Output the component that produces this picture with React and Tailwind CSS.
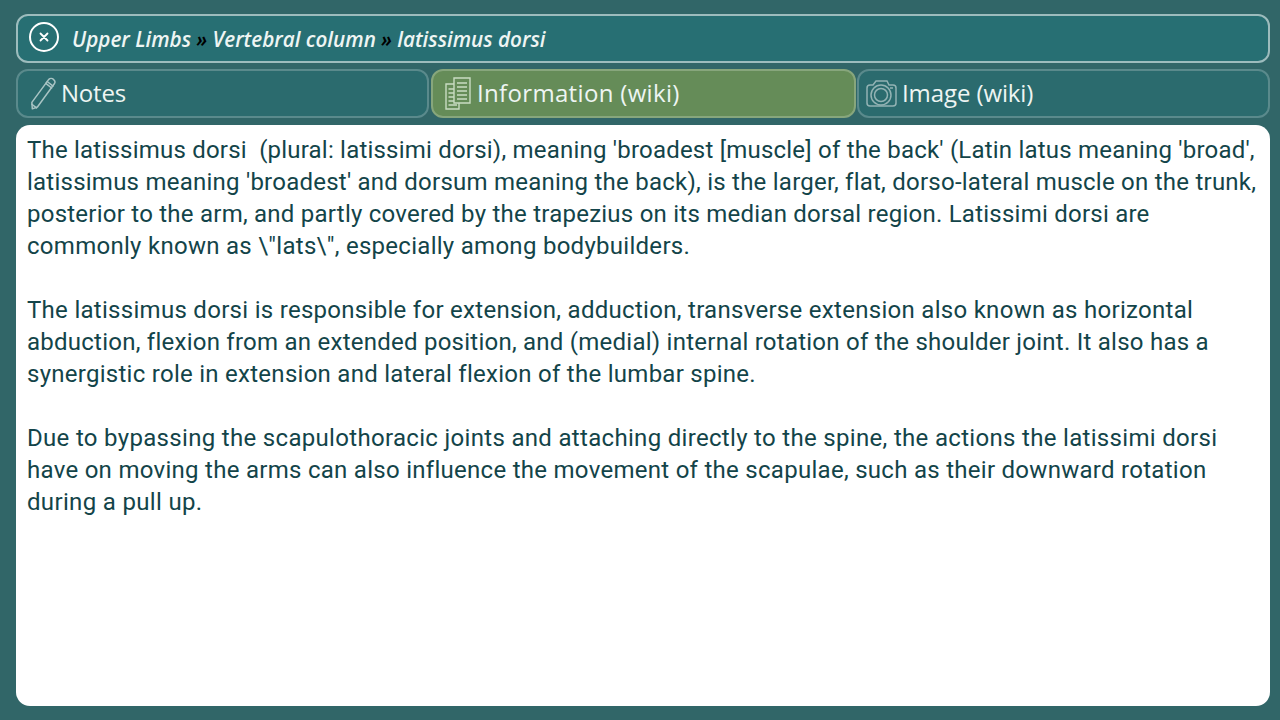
const Pencil = () => (
  <svg width="26" height="36" viewBox="0 0 28 36" fill="none" stroke="#a9c4c4" strokeWidth="1.6" strokeLinejoin="round" strokeLinecap="round" className="shrink-0">
    <path d="M2 27 L20 2.5 C21.5 1 24 1 25.5 2.5 C27 3.8 27.3 5.5 26.2 7 L8 32 L2.5 34 Z" />
    <path d="M18.5 4.5 L24.8 9.5" />
    <path d="M17 6.5 L23.3 11.5" />
    <path d="M2 29 L7 33" />
  </svg>
);
const Docs = () => (
  <svg width="28" height="36" viewBox="0 0 28 36" fill="none" stroke="#c9dcc2" strokeWidth="1.4" className="shrink-0">
    <path d="M10 8 H2 V33 H15 V27" />
    <path d="M10 2 H26 V27 H10 Z" />
    <path d="M13 7 H23 M13 11 H23 M13 15 H23 M13 19 H23 M13 23 H23 M4.5 13 H10 M4.5 17 H10 M4.5 21 H10 M4.5 25 H10 M4.5 29 H13" />
  </svg>
);
const Camera = () => (
  <svg width="32" height="30" viewBox="0 0 32 30" fill="none" stroke="#93b3b4" strokeWidth="1.5" className="shrink-0">
    <path d="M1 9 Q1 6 4 6 H7 L10 2 H21 L23 6 H27 Q30 6 30 9 V24 Q30 27 27 27 H4 Q1 27 1 24 Z" />
    <circle cx="15" cy="16" r="10" />
    <circle cx="15" cy="16" r="6.5" />
    <path d="M24 9 H27" />
  </svg>
);

function Tab({ icon, label, active, className, textClass }) {
  return (
    <div className={`h-[49px] rounded-[12px] border-2 flex items-center ${active ? "bg-[#658c58] border-[#87a67c]" : "bg-[#2b6b6e] border-[#5a8a8c]"} ${className}`}>
      {icon}
      <span className={`text-[24px] leading-none mb-[2px] text-[#eef5f3] font-['Open_Sans',sans-serif] ${textClass}`}>{label}</span>
    </div>
  );
}

export default function App() {
  return (
    <div className="w-[1280px] h-[720px] overflow-hidden bg-[#316668] flex flex-col pt-[14px] pb-[14px] pl-[16px] pr-[10px]">
      <div className="h-[49px] shrink-0 rounded-[12px] border-2 border-[#9dbcbd] bg-[#276f73] flex items-center pl-[11px] gap-[13px]">
        <div className="w-[30px] h-[30px] mb-[3px] rounded-full border-2 border-white flex items-center justify-center">
          <svg width="10" height="10" viewBox="0 0 10 10" stroke="white" strokeWidth="1.8" strokeLinecap="round"><path d="M1.5 1.5 L8.5 8.5 M8.5 1.5 L1.5 8.5" /></svg>
        </div>
        <div className="text-[20.7px] mt-[3px] italic font-semibold text-[#eef5f3] font-['Open_Sans',sans-serif]">
          Upper Limbs <span className="text-black">»</span> Vertebral column <span className="text-black">»</span> latissimus dorsi
        </div>
      </div>
      <div className="flex mt-[6px] shrink-0">
        <Tab className="w-[413px] pl-[12px] gap-[5px]" icon={<Pencil />} textClass="tracking-[-0.2px]" label="Notes" />
        <Tab className="w-[425px] ml-[2px] pl-[11px] gap-[5px]" textClass="tracking-[0.33px]" active icon={<Docs />} label="Information (wiki)" />
        <Tab className="w-[413px] ml-[1px] pl-[7px] gap-[4px]" textClass="tracking-[-0.1px]" icon={<Camera />} label="Image (wiki)" />
      </div>
      <div className="flex-1 mt-[7px] bg-white rounded-[14px] pt-[9px] pl-[11px] text-[24px] leading-[32px] text-[#134449] font-['Roboto',sans-serif] whitespace-pre">
        <p>
          <span className="block tracking-[0.21px]">The latissimus dorsi  (plural: latissimi dorsi), meaning 'broadest [muscle] of the back' (Latin latus meaning 'broad',</span>
          <span className="block tracking-[0.24px]">latissimus meaning 'broadest' and dorsum meaning the back), is the larger, flat, dorso-lateral muscle on the trunk,</span>
          <span className="block tracking-[0.24px]">posterior to the arm, and partly covered by the trapezius on its median dorsal region. Latissimi dorsi are</span>
          <span className="block tracking-[0.28px]">commonly known as \"lats\", especially among bodybuilders.</span>
        </p>
        <p className="mt-[32px]">
          <span className="block tracking-[0.29px]">The latissimus dorsi is responsible for extension, adduction, transverse extension also known as horizontal</span>
          <span className="block tracking-[0.245px]">abduction, flexion from an extended position, and (medial) internal rotation of the shoulder joint. It also has a</span>
          <span className="block tracking-[0.27px]">synergistic role in extension and lateral flexion of the lumbar spine.</span>
        </p>
        <p className="mt-[32px]">
          <span className="block tracking-[0.315px]">Due to bypassing the scapulothoracic joints and attaching directly to the spine, the actions the latissimi dorsi</span>
          <span className="block tracking-[0.28px]">have on moving the arms can also influence the movement of the scapulae, such as their downward rotation</span>
          <span className="block tracking-[0.33px]">during a pull up.</span>
        </p>
      </div>
    </div>
  );
}
